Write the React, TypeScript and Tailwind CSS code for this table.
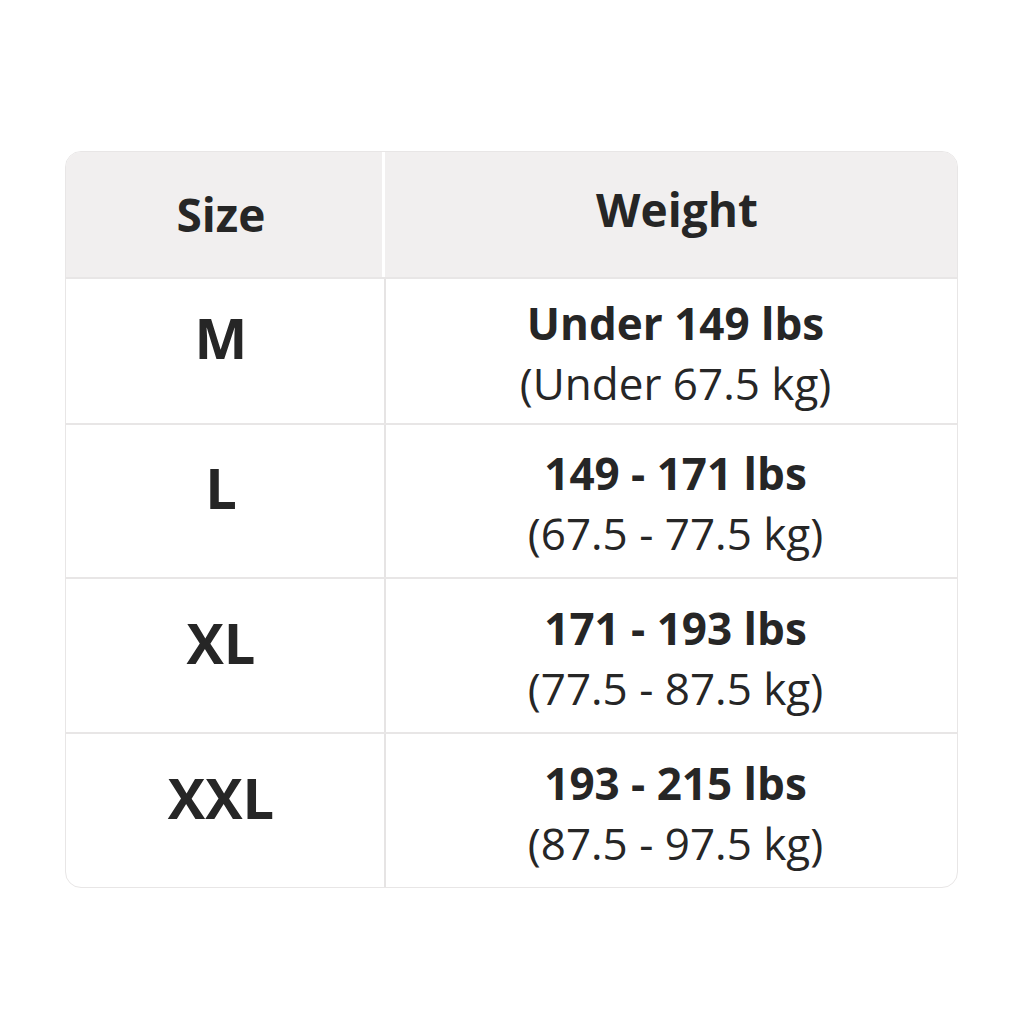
import React from 'react';

const ROWS = [
  { size: 'M', lbs: 'Under 149 lbs', kg: '(Under 67.5 kg)', h: 'h-[146px]' },
  { size: 'L', lbs: '149 - 171 lbs', kg: '(67.5 - 77.5 kg)', h: 'h-[154px]' },
  { size: 'XL', lbs: '171 - 193 lbs', kg: '(77.5 - 87.5 kg)', h: 'h-[155px]' },
  { size: 'XXL', lbs: '193 - 215 lbs', kg: '(87.5 - 97.5 kg)', h: 'h-[155px]' },
];

export default function App() {
  return (
    <div
      className="w-[1024px] h-[1024px] bg-white pt-[151px] pl-[65px] text-[#262626]"
      style={{ fontFamily: '"Open Sans", "Noto Sans", sans-serif' }}
    >
      <div className="w-[893px] rounded-[16px] border border-[#e8e6e6] overflow-hidden">
        {/* Header */}
        <div className="grid grid-cols-[319px_1fr] h-[125px]">
          <div className="bg-[#f1efef] border-r-[3px] border-white flex items-center justify-center pr-[6px]">
            <span className="text-[46px] font-bold">Size</span>
          </div>
          <div className="bg-[#f1efef] flex items-center justify-center pb-[10px] pl-[12px]">
            <span className="text-[46px] font-bold">Weight</span>
          </div>
        </div>

        {/* Body */}
        {ROWS.map((row) => (
          <div
            key={row.size}
            className={`grid grid-cols-[320px_1fr] border-t-2 border-[#e8e6e6] ${row.h}`}
          >
            <div className="border-r-2 border-[#e6e4e4] flex items-center justify-center pb-[28px] pr-[8px]">
              <span className="text-[56px] font-bold">{row.size}</span>
            </div>
            <div className="flex flex-col items-center justify-center leading-[60px] pt-[4px] pl-[8px]">
              <span className="text-[44px] font-bold">{row.lbs}</span>
              <span className="text-[44px]">{row.kg}</span>
            </div>
          </div>
        ))}
      </div>
    </div>
  );
}
